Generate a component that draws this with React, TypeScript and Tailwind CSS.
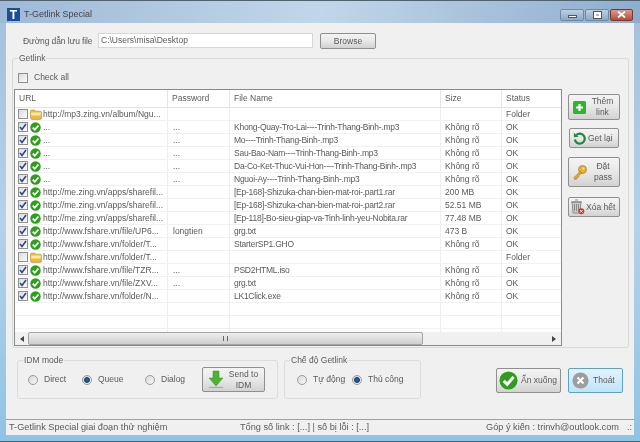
import React from "react";

const rows: [boolean, string, string, string, string, string][] = [
  [false, "http://mp3.zing.vn/album/Ngu...", "", "", "", "Folder"],
  [true, "...", "...", "Khong-Quay-Tro-Lai----Trinh-Thang-Binh-.mp3", "Không rõ", "OK"],
  [true, "...", "...", "Mo----Trinh-Thang-Binh-.mp3", "Không rõ", "OK"],
  [true, "...", "...", "Sau-Bao-Nam----Trinh-Thang-Binh-.mp3", "Không rõ", "OK"],
  [true, "...", "...", "Da-Co-Ket-Thuc-Vui-Hon----Trinh-Thang-Binh-.mp3", "Không rõ", "OK"],
  [true, "...", "...", "Nguoi-Ay----Trinh-Thang-Binh-.mp3", "Không rõ", "OK"],
  [true, "http://me.zing.vn/apps/sharefil...", "", "[Ep-168]-Shizuka-chan-bien-mat-roi-.part1.rar", "200 MB", "OK"],
  [true, "http://me.zing.vn/apps/sharefil...", "", "[Ep-168]-Shizuka-chan-bien-mat-roi-.part2.rar", "52.51 MB", "OK"],
  [true, "http://me.zing.vn/apps/sharefil...", "", "[Ep-118]-Bo-sieu-giap-va-Tinh-linh-yeu-Nobita.rar", "77.48 MB", "OK"],
  [true, "http://www.fshare.vn/file/UP6...", "longtien", "grg.txt", "473 B", "OK"],
  [true, "http://www.fshare.vn/folder/T...", "", "StarterSP1.GHO", "Không rõ", "OK"],
  [false, "http://www.fshare.vn/folder/T...", "", "", "", "Folder"],
  [true, "http://www.fshare.vn/file/TZR...", "...", "PSD2HTML.iso", "Không rõ", "OK"],
  [true, "http://www.fshare.vn/file/ZXV...", "...", "grg.txt", "Không rõ", "OK"],
  [true, "http://www.fshare.vn/folder/N...", "", "LK1Click.exe", "Không rõ", "OK"],
];

const cols = "grid grid-cols-[153px_62px_211px_61px_1fr]";
const cell = "border-r border-[#eeeeee] pl-[3px] whitespace-nowrap overflow-hidden leading-[12px]";

function Check({ size = 11 }: { size?: number }) {
  return (
    <svg width={size} height={size} viewBox="0 0 12 12" className="shrink-0">
      <circle cx="6" cy="6" r="5.7" fill="#2f9e1f" />
      <path d="M3 6.2 5.2 8.4 9.2 3.8" fill="none" stroke="#fff" strokeWidth="1.9" />
    </svg>
  );
}

function Folder() {
  return (
    <svg width="12" height="11" viewBox="0 0 12 11" className="shrink-0">
      <path d="M.5 2.5C.5 1.5 1 1 2 1h2.5l1 1.2H10c.9 0 1.5.5 1.5 1.3V9c0 .8-.6 1.4-1.4 1.4H2C1 10.4.5 9.8.5 9z" fill="#e9b94a" stroke="#b98a2a" strokeWidth=".6" />
      <rect x="1.2" y="3.5" width="9.6" height="3" fill="#fbe9a8" />
    </svg>
  );
}

function Box({ on }: { on: boolean }) {
  return (
    <span className="w-[10px] h-[10px] shrink-0 border border-[#8e8f8f] bg-gradient-to-br from-[#dcdcdc] to-[#fbfbfb] flex items-center justify-center">
      {on && (
        <svg width="8" height="8" viewBox="0 0 8 8">
          <path d="M1 4 3 6.5 7 1" fill="none" stroke="#2d3f8f" strokeWidth="1.5" />
        </svg>
      )}
    </span>
  );
}

function Radio({ on, label, className }: { on?: boolean; label: string; className: string }) {
  return (
    <span className={"flex items-center whitespace-nowrap " + className}>
      <span className="w-[10px] h-[10px] shrink-0 rounded-full border border-[#9a9a9a] bg-gradient-to-br from-[#d8d8d8] to-[#f8f8f8] flex items-center justify-center">
        {on && <span className="w-[6px] h-[6px] rounded-full bg-[#1c5f9c] border border-[#0d3c6e]" />}
      </span>
      <span className="ml-[6px]">{label}</span>
    </span>
  );
}

const btn =
  "flex items-center border border-[#8f8f8f] rounded-[2px] bg-gradient-to-b from-[#f4f4f4] via-[#e8e8e8] to-[#d2d2d2] text-center leading-[11px]";

export default function App() {
  return (
    <div
      className="w-[640px] h-[442px] flex flex-col overflow-hidden bg-gradient-to-b from-[#a4bfd9] via-[#b6d2e8] to-[#8fc3e4] border-t border-b border-[#51626f] text-[8.5px] text-[#5a5a5a] blur-[0.45px]"
      style={{ fontFamily: '"Liberation Sans", Arial, sans-serif' }}
    >
      <div className="h-[22px] shrink-0 flex items-center pt-[5px] pl-[7px] pr-[7px] bg-gradient-to-r from-[#9ebad8] via-[#c2d6e9] to-[#8eaecf]">
        <span className="w-[13px] h-[13px] bg-[#1d4f96] text-white font-bold text-[12px] flex items-center justify-center leading-none">T</span>
        <span className="ml-[4px] text-[9px] text-[#444]">T-Getlink Special</span>
        <div className="ml-auto flex gap-[1px]">
          <span className="w-[24px] h-[12px] border border-[#6d8aa8] rounded-[2px] bg-gradient-to-b from-[#bcd0e4] to-[#8fa9c4] flex items-end justify-center pb-[2px]">
            <span className="w-[9px] h-[3px] bg-white border border-[#555]" />
          </span>
          <span className="w-[24px] h-[12px] border border-[#6d8aa8] rounded-[2px] bg-gradient-to-b from-[#bcd0e4] to-[#8fa9c4] flex items-center justify-center">
            <span className="w-[7px] h-[6px] border-[2px] border-white outline outline-[#555]" />
          </span>
          <span className="w-[23px] h-[12px] border border-[#7a3a30] rounded-[2px] bg-gradient-to-b from-[#d89a90] to-[#b84a38] flex items-center justify-center">
            <svg width="9" height="7" viewBox="0 0 9 7"><path d="M1 .5l7 6M8 .5l-7 6" stroke="#fff" strokeWidth="1.8" /></svg>
          </span>
        </div>
      </div>

      <div className="mx-[6px] h-[412px] shrink-0 bg-[#f0f0f0] flex flex-col">
        <div className="flex items-start h-[16px] mt-[10px] pl-[17px]">
          <span className="w-[75px] shrink-0 leading-[16px] whitespace-nowrap tracking-[-0.1px]">Đường dẫn lưu file</span>
          <span className="w-[215px] h-[15px] bg-white border border-[#d6d6d6] pl-[2px] leading-[13px]">C:\Users\misa\Desktop</span>
          <span className={btn + " ml-[7px] w-[56px] h-[16px] justify-center"}>Browse</span>
        </div>

        <div className="relative mt-[9px] ml-[6px] w-[617px] h-[290px] border border-[#d9d9d9] rounded-[3px] pt-[13px] pl-[1px]">
          <span className="absolute left-[5px] -top-[7px] bg-[#f0f0f0] px-[1px] leading-[12px]">Getlink</span>
          <div className="flex items-center pl-[4px] h-[11px]">
            <Box on={false} />
            <span className="ml-[6px]">Check all</span>
          </div>
          <div className="flex items-start mt-[6px]">
            <div className="w-[548px] h-[257px] border border-[#8a8a8a] bg-white flex flex-col">
              <div className={cols + " h-[18px] shrink-0 border-b border-[#e4e4e4]"}>
                {["URL", "Password", "File Name", "Size", "Status"].map((h) => (
                  <div key={h} className="border-r border-[#e4e4e4] pl-[4px] leading-[16px] last:border-r-0">{h}</div>
                ))}
              </div>
              <div className="flex-1 overflow-hidden">
                {rows.map((r, i) => (
                  <div key={i} className={cols + " h-[13px] border-b border-[#f1f1f1]"}>
                    <div className={cell + " flex items-center"}>
                      <Box on={r[0]} />
                      <span className="ml-[2px] w-[12px] flex items-center">{r[0] ? <Check /> : <Folder />}</span>
                      <span className="ml-[1px]">{r[1]}</span>
                    </div>
                    <div className={cell + " pl-[5px]"}>{r[2]}</div>
                    <div className={cell + " pl-[4px] tracking-[-0.25px]"}>{r[3]}</div>
                    <div className={cell + " pl-[4px]"}>{r[4]}</div>
                    <div className={cell + " pl-[4px] border-r-0"}>{r[5]}</div>
                  </div>
                ))}
                {[0, 1, 2].map((i) => (
                  <div key={i} className={cols + " h-[13px] border-b border-[#f1f1f1]"}>
                    <div className={cell} /><div className={cell} /><div className={cell} /><div className={cell} /><div />
                  </div>
                ))}
              </div>
              <div className="h-[13px] shrink-0 flex items-stretch bg-[#f0f0f0] text-[#333]">
                <span className="w-[13px] flex items-center justify-center">
                  <svg width="4" height="6" viewBox="0 0 4 6"><path d="M4 0v6L0 3z" fill="#444" /></svg>
                </span>
                <span className="w-[395px] border border-[#a4a4a4] rounded-[2px] bg-gradient-to-b from-[#efefef] to-[#cfcfcf] flex items-center justify-center">
                  <span className="w-[5px] h-[5px] border-x border-[#666]" />
                </span>
                <span className="flex-1" />
                <span className="w-[14px] flex items-center justify-center">
                  <svg width="4" height="6" viewBox="0 0 4 6"><path d="M0 0v6l4-3z" fill="#444" /></svg>
                </span>
              </div>
            </div>
            <div className="ml-[6px] w-[52px] flex flex-col items-start pt-[5px]">
              <div className={btn + " w-[52px] h-[26px] pl-[4px]"}>
                <svg width="13" height="13" viewBox="0 0 13 13" className="shrink-0">
                  <rect width="13" height="13" rx="1.5" fill="#2db52d" />
                  <path d="M6.5 3v7M3 6.5h7" stroke="#fff" strokeWidth="2.2" />
                </svg>
                <span className="flex-1">Thêm<br />link</span>
              </div>
              <div className={btn + " w-[50px] h-[20px] mt-[8px] ml-[1px] pl-[3px]"}>
                <svg width="13" height="13" viewBox="0 0 13 13" className="shrink-0">
                  <path d="M3.3 3A5 5 0 1 1 1.8 7.5" fill="none" stroke="#1c8a3c" strokeWidth="2.2" />
                  <path d="M.8 .8 1 5.2 5.5 4.8z" fill="#1c8a3c" />
                </svg>
                <span className="ml-[2px] whitespace-nowrap">Get lại</span>
              </div>
              <div className={btn + " w-[52px] h-[30px] mt-[9px] pl-[4px]"}>
                <svg width="14" height="15" viewBox="0 0 14 15" className="shrink-0">
                  <circle cx="9.5" cy="4.500" r="4" fill="#e3b23a" stroke="#a97d1c" strokeWidth=".7" />
                  <path d="M7 6.500 1 12.500l.6 2 2-.2.3-1.700 1.700-.3.3-1.700L9 8z" fill="#dba92f" stroke="#a97d1c" strokeWidth=".6" />
                  <circle cx="10.500" cy="3.500" r="1" fill="#fbeeb8" />
                </svg>
                <span className="flex-1">Đặt<br />pass</span>
              </div>
              <div className={btn + " w-[52px] h-[20px] mt-[10px] pl-[1px]"}>
                <svg width="15" height="16" viewBox="0 0 15 16" className="shrink-0">
                  <path d="M2 3h9l-1 11H3z" fill="#c9ccd2" stroke="#777" strokeWidth=".8" />
                  <path d="M1 3h11M5 1h3M4.5 5v7M6.5 5v7M8.5 5v7" stroke="#777" strokeWidth=".8" />
                  <circle cx="11.3" cy="12.3" r="3" fill="#d8312b" />
                  <path d="M10 11l2.600 2.600M12.600 11 10 13.600" stroke="#fff" strokeWidth=".9" />
                </svg>
                <span className="ml-[1px] whitespace-nowrap">Xóa hết</span>
              </div>
            </div>
          </div>
        </div>

        <div className="flex items-start mt-[12px]">
          <div className="relative ml-[11px] w-[261px] h-[39px] border border-[#dcdcdc] rounded-[3px] flex items-center">
            <span className="absolute left-[5px] -top-[7px] bg-[#f0f0f0] px-[1px] leading-[12px]">IDM mode</span>
            <Radio label="Direct" className="ml-[10px] w-[54px]" />
            <Radio on label="Queue" className="ml-[0px] w-[62px]" />
            <Radio label="Dialog" className="ml-[1px] w-[57px]" />
            <div className={btn + " w-[63px] h-[25px] pl-[6px]"}>
              <svg width="14" height="19" viewBox="0 0 14 19" className="shrink-0">
                <path d="M4 1h6v7h4l-7 8-7-8h4z" fill="#4fb233" stroke="#3b8d24" strokeWidth=".5" />
                <path d="M0 17.500h14" stroke="#a8a8a8" strokeWidth="1.200" />
              </svg>
              <span className="flex-1">Send to<br />IDM</span>
            </div>
          </div>
          <div className="relative ml-[6px] w-[137px] h-[39px] border border-[#dcdcdc] rounded-[3px] flex items-center">
            <span className="absolute left-[5px] -top-[7px] bg-[#f0f0f0] px-[1px] leading-[12px]">Chế độ Getlink</span>
            <Radio label="Tự động" className="ml-[12px] w-[55px]" />
            <Radio on label="Thủ công" className="" />
          </div>
          <div className={btn + " ml-[75px] mt-[8px] w-[65px] h-[25px] pl-[2px]"}>
            <Check size={19} />
            <span className="ml-[3px] whitespace-nowrap">Ẩn xuống</span>
          </div>
          <div className="ml-[7px] mt-[8px] w-[55px] h-[25px] pl-[3px] flex items-center border border-[#5da0c8] rounded-[2px] bg-gradient-to-b from-[#e4f3fc] to-[#bfe3f8]">
            <svg width="17" height="17" viewBox="0 0 20 20" className="shrink-0">
              <circle cx="10" cy="10" r="9.5" fill="#9e9e9e" />
              <path d="M6.500 6.500l7 7M13.500 6.500l-7 7" stroke="#fff" strokeWidth="2.4" />
            </svg>
            <span className="ml-[4px]">Thoát</span>
          </div>
        </div>

        <div className="mt-auto h-[16px] shrink-0 border-t border-[#a0a0a0] flex items-center pl-[3px] pr-[2px] text-[9.2px] whitespace-nowrap">
          <span className="w-[231px] shrink-0">T-Getlink Special giai đoạn thử nghiệm</span>
          <span className="w-[246px] shrink-0">Tổng số link : [...] | số bị lỗi : [...]</span>
          <span>Góp ý kiến : trinvh@outlook.com</span>
          <span className="ml-auto text-[9px] leading-none">.:</span>
        </div>
      </div>
    </div>
  );
}
